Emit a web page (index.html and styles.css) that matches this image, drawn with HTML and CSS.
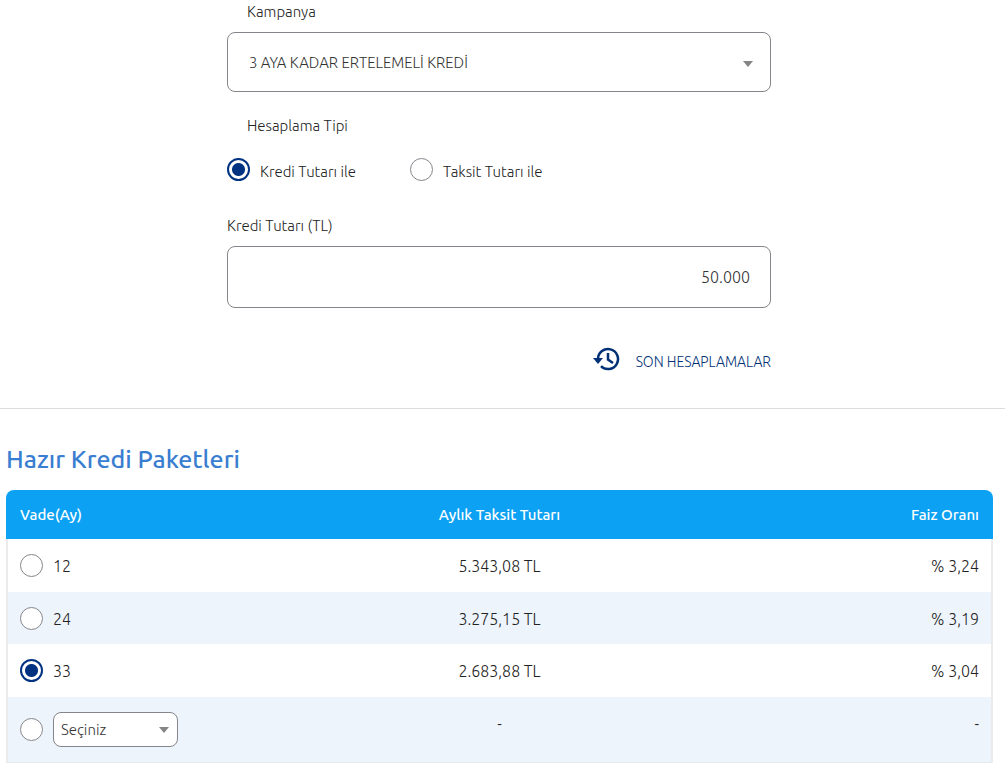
FILE: index.html
```html
<!DOCTYPE html>
<html lang="tr">
<head>
<meta charset="utf-8">
<meta name="viewport" content="width=device-width, initial-scale=1">
<title>Kredi Hesaplama</title>
<link rel="stylesheet" href="styles.css">
</head>
<body>
<main class="page">
  <form class="calculator">
    <label class="label label-indented" for="campaign">Kampanya</label>
    <div class="select-wrap">
      <select class="field campaign" id="campaign"><option>3 AYA KADAR ERTELEMELİ KREDİ</option></select>
      <svg class="caret" viewBox="0 0 10 6" aria-hidden="true"><path d="M0 0h10L5 6z"/></svg>
    </div>
    <fieldset class="types">
      <legend class="label label-indented">Hesaplama Tipi</legend>
      <div class="options">
        <label class="option"><input class="radio" type="radio" name="type" checked><span>Kredi Tutarı ile</span></label>
        <label class="option"><input class="radio" type="radio" name="type"><span>Taksit Tutarı ile</span></label>
      </div>
    </fieldset>
    <label class="label amount-label" for="amount">Kredi Tutarı (TL)</label>
    <input class="field amount" id="amount" type="text" value="50.000">
    <a class="history" href="#history">
      <svg class="history-icon" viewBox="0 0 27 24" aria-hidden="true">
        <path class="stroke" d="M5 12A10 10 0 1 1 8 19.200"/>
        <path class="stroke" d="M15 6v6.500l5 3.500"/>
        <path class="head" d="M0 11h10l-5 6z"/>
      </svg>
      <span class="history-text">SON HESAPLAMALAR</span>
    </a>
  </form>
  <section class="packages">
    <h2 class="title">Hazır Kredi Paketleri</h2>
    <table class="table">
      <thead>
        <tr><th scope="col">Vade(Ay)</th><th scope="col">Aylık Taksit Tutarı</th><th scope="col">Faiz Oranı</th></tr>
      </thead>
      <tbody>
        <tr><td><label class="term"><input class="radio" type="radio" name="term"><span>12</span></label></td><td>5.343,08 TL</td><td>% 3,24</td></tr>
        <tr><td><label class="term"><input class="radio" type="radio" name="term"><span>24</span></label></td><td>3.275,15 TL</td><td>% 3,19</td></tr>
        <tr><td><label class="term"><input class="radio" type="radio" name="term" checked><span>33</span></label></td><td>2.683,88 TL</td><td>% 3,04</td></tr>
        <tr>
          <td>
            <div class="term term-custom">
              <input class="radio" type="radio" name="term" aria-label="Diğer vade">
              <div class="select-wrap small">
                <select class="field term-select" aria-label="Vade"><option>Seçiniz</option></select>
                <svg class="caret" viewBox="0 0 10 6" aria-hidden="true"><path d="M0 0h10L5 6z"/></svg>
              </div>
            </div>
          </td>
          <td>-</td><td>-</td>
        </tr>
      </tbody>
    </table>
  </section>
</main>
</body>
</html>
```
FILE: styles.css
```css
* { box-sizing: border-box; }

body {
  margin: 0;
  background: #fff;
  color: #222;
  font: 300 15px/24px Ubuntu, "Open Sans", "Noto Sans", sans-serif;
}

.calculator {
  display: flex;
  flex-direction: column;
  width: 100%;
  max-width: 551px;
  margin: 0 auto;
  padding: 0 7px 34px 0;
}

.label {
  display: block;
  padding: 0;
}

.label-indented { padding-left: 20px; }

.field {
  width: 100%;
  border: 1px solid #85868b;
  border-radius: 8px;
  background: #fff;
  color: #333;
  font: inherit;
  appearance: none;
}

.select-wrap {
  display: grid;
  align-items: center;
  margin-top: 8px;
}

.select-wrap > * { grid-area: 1 / 1; }

.campaign {
  height: 60px;
  padding: 2px 40px 0 21px;
}

.caret {
  justify-self: end;
  width: 10px;
  height: 6px;
  margin: 3px 18px 0 0;
  fill: #858585;
  pointer-events: none;
}

.types {
  margin: 22px 0 0;
  padding: 0;
  border: 0;
}

.options {
  display: flex;
  gap: 54px;
  margin-top: 20px;
}

.option {
  display: flex;
  gap: 10px;
}

.option span { padding-top: 2px; }

.radio {
  flex: none;
  width: 23px;
  height: 23px;
  margin: 0;
  border: 1px solid #85868b;
  border-radius: 50%;
  background: #fff;
  appearance: none;
}

.radio:checked {
  border: 2px solid #003282;
  background: radial-gradient(circle, #003282 6px, #fff 7px);
}

.amount-label { margin-top: 30px; }

.amount {
  height: 62px;
  margin-top: 8px;
  padding: 0 20px;
  font-size: 16px;
  text-align: right;
}

.history {
  display: flex;
  align-items: flex-start;
  align-self: flex-end;
  gap: 16px;
  margin-top: 38px;
  color: #003075;
  font-size: 14px;
  text-decoration: none;
}

.history-text { padding-top: 4px; }

.history-icon {
  width: 27px;
  height: 24px;
  margin-top: 1px;
}

.stroke {
  fill: none;
  stroke: #003075;
  stroke-width: 2.5;
}

.head { fill: #003075; }

.packages {
  padding: 34px 12px 0 6px;
  border-top: 1px solid #ddd;
}

.title {
  margin: 0 0 15px;
  color: #397ed0;
  font-size: 25px;
  font-weight: 500;
  line-height: 32px;
}

.table {
  width: 100%;
  table-layout: fixed;
  border-spacing: 0;
}

.table th {
  height: 49px;
  padding: 0 14px;
  background: #0ca1f3;
  color: #fff;
  font-size: 15px;
  font-weight: 500;
}

.table th:first-child { border-radius: 8px 0 0; }
.table th:last-child { border-radius: 0 8px 0 0; }

.table td {
  height: 53px;
  padding: 15px 14px 0;
  font-size: 16px;
  text-align: center;
  vertical-align: top;
}

.table tr > :first-child { text-align: left; }
.table tr > :last-child { text-align: right; }

.table td:first-child {
  padding-left: 12px;
  border-left: 2px solid #ebebeb;
}

.table td:last-child {
  padding-right: 12px;
  border-right: 2px solid #ebebeb;
}

.table tr:nth-child(even) td { height: 52px; background: #edf4fb; }

.table tbody tr:last-child td {
  height: 66px;
  border-bottom: 1px solid #e6eaed;
}

.term {
  display: flex;
  gap: 10px;
}

.term-custom { align-items: center; }

.small {
  width: 125px;
  margin: 0;
}

.small .caret { margin: 0 9px 0 0; }

.term-select {
  height: 35px;
  padding: 0 24px 0 7px;
  font-size: 15px;
}
```
